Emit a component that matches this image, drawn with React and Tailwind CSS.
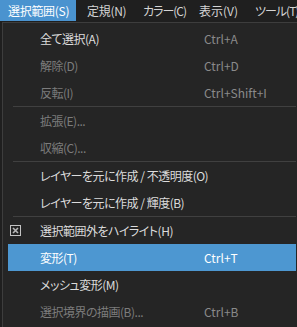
import React from 'react';

const menus = [
  { label: '定規(N)', cls: 'tracking-[-0.3px]' },
  { label: 'カラー(C)', cls: 'tracking-[-1px]' },
  { label: '表示(V)', cls: 'tracking-normal' },
  { label: 'ツール(T)', cls: 'tracking-[-1px]' },
];

const items = [
  { label: '全て選択(A)', key: 'Ctrl+A' },
  { label: '解除(D)', key: 'Ctrl+D', off: true },
  { label: '反転(I)', key: 'Ctrl+Shift+I', off: true },
  'sep',
  { label: '拡張(E)...', off: true },
  { label: '収縮(C)...', off: true },
  'sep',
  { label: 'レイヤーを元に作成 / 不透明度(O)' },
  { label: 'レイヤーを元に作成 / 輝度(B)' },
  'sep',
  { label: '選択範囲外をハイライト(H)', check: true },
  { label: '変形(T)', key: 'Ctrl+T', active: true },
  { label: 'メッシュ変形(M)' },
  { label: '選択境界の描画(B)...', key: 'Ctrl+B', off: true },
];

function CheckIcon() {
  return (
    <svg width="11" height="11" viewBox="0 0 11 11" className="block">
      <rect x="0.5" y="0.5" width="10" height="10" fill="none" stroke="#c4c4c4" />
      <path d="M3 3 L8 8 M8 3 L3 8" stroke="#b8b8b8" strokeWidth="1.6" />
    </svg>
  );
}

export default function App() {
  return (
    <div
      className="w-[297px] h-[327px] overflow-hidden bg-[#1f1f1f] text-[12px] [font-feature-settings:'palt']"
      style={{ fontFamily: '"Noto Sans CJK JP", "Noto Sans", sans-serif' }}
    >
      <div className="flex h-[22px] whitespace-nowrap text-[#d4d4d4]">
        <div className="w-[76px] h-[21px] pl-2 leading-[21px] tracking-[-0.3px] bg-[#4a93cf] text-white shrink-0">
          選択範囲(S)
        </div>
        {menus.map((m) => (
          <div key={m.label} className={`w-[56px] pl-[11px] leading-[21px] shrink-0 ${m.cls}`}>
            {m.label}
          </div>
        ))}
      </div>
      <div className="ml-[2px] w-[300px] h-[310px] border border-[#3d3d3d] bg-[#252525] px-[5px] pt-[2px] pb-[1px]">
        {items.map((it, i) =>
          it === 'sep' ? (
            <div key={i} className="h-px ml-[5px] bg-[#404040]" />
          ) : (
            <div
              key={i}
              className={`relative flex h-[27px] items-center whitespace-nowrap ${
                it.active ? 'bg-[#4d97d1] text-white' : it.off ? 'text-[#7c7c7c]' : 'text-[#dcdcdc]'
              }`}
            >
              {it.check && (
                <div className="absolute left-[2px] top-[8px]">
                  <CheckIcon />
                </div>
              )}
              <div className="w-[196px] pl-8 tracking-[-0.5px]">{it.label}</div>
              {it.key && <div className={it.active ? 'text-white' : 'text-[#8a8a8a]'}>{it.key}</div>}
            </div>
          )
        )}
      </div>
    </div>
  );
}
